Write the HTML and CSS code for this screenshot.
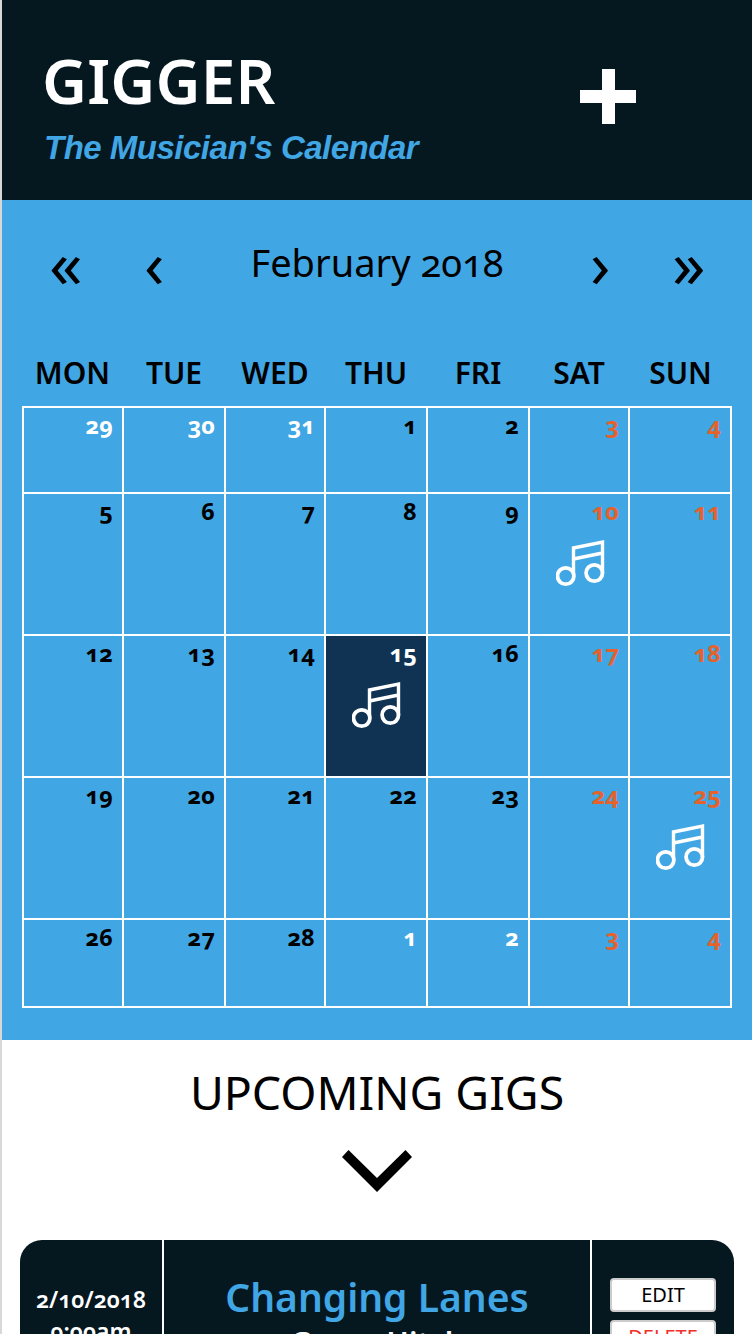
FILE: index.html

```html
<!DOCTYPE html>
<html lang="en">
<head>
<meta charset="UTF-8">
<meta name="viewport" content="width=device-width, initial-scale=1.0">
<title>Gigger</title>
<link rel="stylesheet" href="styles.css">
</head>
<body>

<svg class="sprite" width="0" height="0">
    <symbol id="note" viewBox="0 0 50 48">
        <path d="M17.5 36V9L46.5 3V34M17.5 20L46.5 14" fill="none" stroke="currentColor" stroke-width="3.4"/>
        <circle cx="9.7" cy="37" r="8.2" fill="none" stroke="currentColor" stroke-width="3.8"/>
        <circle cx="38.3" cy="34" r="8.2" fill="none" stroke="currentColor" stroke-width="3.8"/>
    </symbol>
</svg>

<header class="top">
    <div class="brand">
        <h1>GIGGER</h1>
        <p>The Musician's Calendar</p>
    </div>
    <div class="plus"></div>
</header>

<section class="calendar">
    <div class="month">
        <span class="arrow a1">«</span>
        <span class="arrow a2">‹</span>
        <h2>February 2018</h2>
        <span class="arrow a3">›</span>
        <span class="arrow a4">»</span>
    </div>

    <div class="weekdays">
        <span>MON</span><span>TUE</span><span>WED</span><span>THU</span><span>FRI</span><span>SAT</span><span>SUN</span>
    </div>

    <div class="grid">
        <div class="day other">29</div>
        <div class="day other">30</div>
        <div class="day other">31</div>
        <div class="day">1</div>
        <div class="day">2</div>
        <div class="day end">3</div>
        <div class="day end">4</div>

        <div class="day">5</div>
        <div class="day">6</div>
        <div class="day">7</div>
        <div class="day">8</div>
        <div class="day">9</div>
        <div class="day end">10<svg class="note"><use href="#note"/></svg></div>
        <div class="day end">11</div>

        <div class="day">12</div>
        <div class="day">13</div>
        <div class="day">14</div>
        <div class="day today">15<svg class="note"><use href="#note"/></svg></div>
        <div class="day">16</div>
        <div class="day end">17</div>
        <div class="day end">18</div>

        <div class="day">19</div>
        <div class="day">20</div>
        <div class="day">21</div>
        <div class="day">22</div>
        <div class="day">23</div>
        <div class="day end">24</div>
        <div class="day end">25<svg class="note"><use href="#note"/></svg></div>

        <div class="day">26</div>
        <div class="day">27</div>
        <div class="day">28</div>
        <div class="day other">1</div>
        <div class="day other">2</div>
        <div class="day end">3</div>
        <div class="day end">4</div>
    </div>
</section>

<section class="upcoming">
    <h2>UPCOMING GIGS</h2>
    <svg class="chevron" viewBox="0 0 70 42"><path d="M0 7L6.5 0L35 28L63.5 0L70 7L35 42Z" fill="currentColor"/></svg>

    <article class="gig">
        <div class="when">
            <p>2/10/2018</p>
            <p>9:00am</p>
        </div>
        <div class="what">
            <h3>Changing Lanes</h3>
            <p>Green Hitch</p>
        </div>
        <div class="actions">
            <button type="button">EDIT</button>
            <button type="button" class="delete">DELETE</button>
        </div>
    </article>
</section>

</body>
</html>
```

FILE: styles.css

```css
* {
    box-sizing: border-box;
}

html, body {
    height: 1334px;
    overflow: hidden;
}

body {
    margin: 0;
    background: #fff;
    border-left: 2px solid #d8d8d8;
    font-family: "Noto Sans", Arial, sans-serif;
    font-variant-numeric: oldstyle-nums;
    color: #000;
}

.sprite {
    display: block;
    height: 0;
}

.top {
    height: 200px;
    background: #05171f;
    display: flex;
    justify-content: space-between;
    padding: 44px 116px 0 40px;
}

.top h1 {
    margin: 0;
    color: #fff;
    font-size: 62px;
    line-height: 72px;
    font-weight: 600;
    letter-spacing: 0.2px;
}

.top p {
    margin: 14px 0 0 2px;
    color: #41a6e4;
    font-family: "Liberation Sans", Arial, sans-serif;
    font-size: 33px;
    line-height: 36px;
    font-weight: bold;
    font-style: italic;
    letter-spacing: -0.5px;
}

.plus {
    width: 56px;
    height: 55px;
    margin-top: 25px;
    background:
        linear-gradient(#fff, #fff) center / 13px 100% no-repeat,
        linear-gradient(#fff, #fff) center / 100% 13px no-repeat;
}

.calendar {
    height: 840px;
    background: #41a6e4;
    padding: 0 20px;
}

.month {
    height: 146px;
    position: relative;
    display: flex;
    justify-content: center;
}

.month h2 {
    margin: 37px 0 0;
    font-size: 38px;
    line-height: 50px;
    font-weight: 400;
}

.arrow {
    position: absolute;
    top: 32px;
    font-size: 66px;
    line-height: 60px;
}

.a1 { left: 27px; }
.a2 { left: 122px; }
.a3 { left: 568px; }
.a4 { left: 650px; }

.weekdays {
    display: grid;
    grid-template-columns: 101px 102px 100px 102px 102px 100px 103px;
    height: 60px;
    text-align: center;
    font-size: 30px;
    line-height: 54px;
    font-weight: 600;
}

.grid {
    display: grid;
    grid-template-columns: 98px 100px 98px 100px 100px 98px 100px;
    grid-template-rows: 84px 140px 140px 140px 86px;
    gap: 2px;
    padding: 2px;
    background: #fff;
    width: 710px;
}

.day {
    position: relative;
    background: #41a6e4;
    text-align: right;
    padding: 3px 9px 0 0;
    font-size: 23.5px;
    line-height: 28px;
    font-weight: 700;
}

.other {
    color: #fff;
}

.end {
    color: #e5622c;
}

.today {
    background: #103353;
    color: #fff;
}

.note {
    position: absolute;
    left: 26px;
    top: 45px;
    width: 50px;
    height: 48px;
    color: #fff;
}

.upcoming {
    text-align: center;
    padding-top: 22px;
}

.upcoming h2 {
    margin: 0;
    font-size: 46.4px;
    line-height: 60px;
    font-weight: 400;
}

.chevron {
    display: block;
    width: 70px;
    height: 42px;
    margin: 28px auto 0;
}

.gig {
    margin: 48px 0 0 18px;
    width: 714px;
    height: 200px;
    background: #05171f;
    border-radius: 22px;
    display: grid;
    grid-template-columns: 142px 2px 426px 2px 142px;
    color: #fff;
}

.when {
    grid-column: 1;
    padding-top: 43px;
    font-size: 23px;
    line-height: 32px;
    font-weight: 600;
    text-align: center;
}

.when p {
    margin: 0;
}

.what {
    grid-column: 3;
    padding-top: 28px;
    box-shadow: -2px 0 0 #fff, 2px 0 0 #fff;
}

.what h3 {
    margin: 0;
    color: #41a6e4;
    font-size: 39px;
    line-height: 58px;
    font-weight: 600;
}

.what p {
    margin: 0;
    font-size: 30px;
    line-height: 33px;
    font-weight: 600;
}

.actions {
    grid-column: 5;
    padding: 38px 18px 0;
    display: flex;
    flex-direction: column;
    gap: 8px;
}

button {
    height: 34px;
    background: #fff;
    border: 2px solid #ccc;
    border-radius: 4px;
    padding: 0 0 2px;
    font-family: inherit;
    font-size: 20px;
    color: #000;
}

.delete {
    color: #f0302a;
}
```
